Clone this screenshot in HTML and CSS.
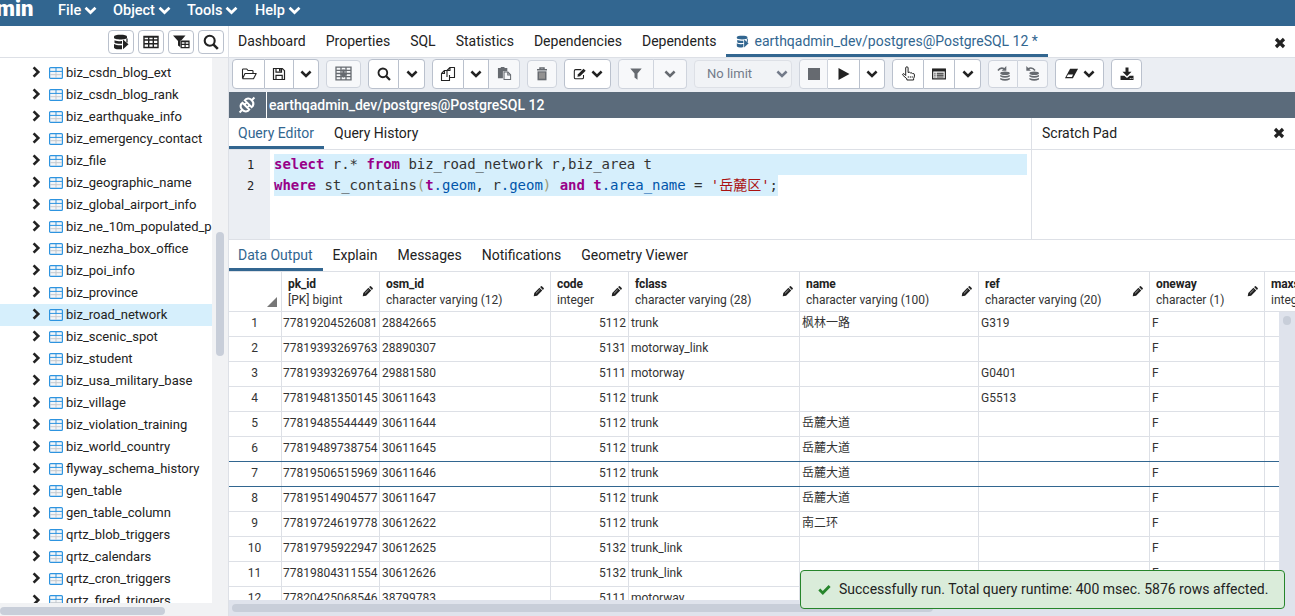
FILE: index.html
```html
<!DOCTYPE html>
<html lang="en">
<head>
    <meta charset="UTF-8">
    <meta name="viewport" content="width=device-width, initial-scale=1.0">
    <title>pgAdmin 4</title>
    <link rel="stylesheet" href="styles.css">
</head>
<body>
    <!-- Icon sprite -->
    <svg class="sprite">
        <symbol id="i-down" viewBox="0 0 12 12"><path d="M1.400 3.500L6 7.900l4.600-4.400" fill="none" stroke="currentColor" stroke-width="2.500"/></symbol>
        <symbol id="i-right" viewBox="0 0 12 12"><path d="M3.600 1.300L8.300 6l-4.700 4.700" fill="none" stroke="currentColor" stroke-width="2.600"/></symbol>
        <symbol id="i-x" viewBox="0 0 12 12"><path d="M2 2l8 8M10 2l-8 8" fill="none" stroke="currentColor" stroke-width="3.2"/></symbol>
        <symbol id="i-table" viewBox="0 0 14 12">
            <rect x=".6" y=".6" width="12.8" height="10.8" rx="1" fill="#f4f6f8" stroke="#2d94e0" stroke-width="1.2"/>
            <path d="M7 4v7M1.2 7.7h11.6" stroke="#c3c8ce" stroke-width="1"/>
            <path d="M7 1v3.5M1 4.4h12" stroke="#2d94e0" stroke-width="1"/>
        </symbol>
        <symbol id="i-query" viewBox="0 0 16 16">
            <path d="M1 2.600C1 1.400 4 .8 7.500.8S14 1.400 14 2.600v1.200C14 5 11 5.500 7.500 5.500S1 5 1 3.800z" fill="currentColor"/>
            <path d="M1.500 6.200c2 .9 5 1 7.500.9V9.800c-3 .2-6.500 0-7.500-1zM1 10c2 1.300 5 1.400 8 1.200v4c-3.500.3-8-.2-8-1.800z" fill="currentColor"/>
            <path d="M10 5.500l5.500 4.800L10 15.300z" fill="currentColor"/>
            <path d="M14 4.500v4" stroke="currentColor" stroke-width="1.200"/>
        </symbol>
        <symbol id="i-grid" viewBox="0 0 16 14"><path d="M1 1.500h14v11H1zM1 5h14M1 8.700h14M5.700 1.500v11M10.300 1.500v11M1 2h14" fill="none" stroke="currentColor" stroke-width="1.400"/></symbol>
        <symbol id="i-filtergrid" viewBox="0 0 17 14">
            <path d="M0 .5h12.500L7.800 6v6.500L5 10.500V6z" fill="currentColor"/>
            <path d="M7.500 5.500h9v8h-9z" fill="#fff"/>
            <path d="M8.200 6h7.800v6.700H8.200zM8.200 9.300H16M12.100 6v6.700M8.200 6.600H16" fill="none" stroke="currentColor" stroke-width="1.200"/>
        </symbol>
        <symbol id="i-search" viewBox="0 0 16 16"><circle cx="6.700" cy="6.700" r="5" fill="none" stroke="currentColor" stroke-width="2.100"/><path d="M10.300 10.300l4.500 4.500" stroke="currentColor" stroke-width="2.600"/></symbol>
        <symbol id="i-open" viewBox="0 0 16 14"><path d="M1.500 11.500V2.800q0-.8.8-.8h3.500l1.200 1.500h4.200q.8 0 .8.800v1.700M1.500 11.700L4 6.500h11.200l-2.700 5.300H1.500" fill="none" stroke="currentColor" stroke-width="1.100" stroke-linejoin="round"/></symbol>
        <symbol id="i-save" viewBox="0 0 14 14"><path d="M1.500 1.500h8.800l2.200 2.200v8.800h-11zM4 12.500V8.300h6.200v4.200M4 1.700v3.500h5.500V1.700" fill="none" stroke="currentColor" stroke-width="1.200"/><path d="M7 2h1.700v2.600H7z" fill="currentColor"/></symbol>
        <symbol id="i-savegrid" viewBox="0 0 17 15">
            <path d="M1 1.200h15v12.600H1zM1 4.400h15M1 7.500h15M1 10.700h15M6 1v13M11 1v13" fill="none" stroke="currentColor" stroke-width="1.300"/>
            <path d="M7.300 3.500h2.400v4h2.800l-4 4.300-4-4.300h2.800z" fill="currentColor"/>
        </symbol>
        <symbol id="i-copy" viewBox="0 0 16 16"><path d="M7 11V4.500L10 1.500h4.500v10H9.500M10 1.500v3H7M1.500 7.500L4.500 4.500H7M4.500 4.500v3h-3v7h8V9" fill="none" stroke="currentColor" stroke-width="1.100" stroke-linejoin="round"/></symbol>
        <symbol id="i-paste" viewBox="0 0 16 16"><path d="M1 2h3V1h4v1h3v3.500H6.300V13H1z" fill="currentColor"/><path d="M7.500 6.500h4.200L14.500 9.300v5.200h-7zM11.500 6.500v3h3" fill="none" stroke="currentColor" stroke-width="1.100"/></symbol>
        <symbol id="i-trash" viewBox="0 0 12 14"><path d="M1 2.800h10M4 2.500V1h4v1.500" fill="none" stroke="currentColor" stroke-width="1.500"/><path d="M1.500 4.300h9v9h-9z" fill="currentColor"/><path d="M4 5.500v6.200M6 5.500v6.200M8 5.500v6.200" stroke="#d5cdc4" stroke-width=".8"/></symbol>
        <symbol id="i-edit" viewBox="0 0 16 14"><path d="M9.500 2H3Q1.500 2 1.500 3.500v7.500q0 1.500 1.500 1.500h7.500Q12 12.500 12 11V8" fill="none" stroke="currentColor" stroke-width="1.200"/><path d="M5 10.200l.7-3L12 1l2.500 2.300-6.400 6.300z" fill="currentColor"/></symbol>
        <symbol id="i-filter" viewBox="0 0 12 12"><path d="M.3.500h11.400L7.500 5.500v6.200L4.500 9.500v-4z" fill="currentColor"/></symbol>
        <symbol id="i-stop" viewBox="0 0 12 12"><path d="M0 0h12v12H0z" fill="currentColor"/></symbol>
        <symbol id="i-play" viewBox="0 0 12 12"><path d="M.5 0l11 6-11 6z" fill="currentColor"/></symbol>
        <symbol id="i-hand" viewBox="0 0 14 15"><path d="M4.200 9.500V2q0-1.200 1.200-1.200T6.600 2v4.500q2-.8 2.600.5 1.600-.5 2 .6 1.800-.3 1.800 1.200 0 2.500-.9 3.700V14H5.400v-1.200L1.300 9.200q-.6-1 .3-1.500t2.600 1.800" fill="none" stroke="currentColor" stroke-width="1" stroke-linejoin="round"/><path d="M6.800 10v2M8.800 10v2M10.700 10v2" stroke="currentColor" stroke-width=".7"/></symbol>
        <symbol id="i-list" viewBox="0 0 15 12"><path d="M.7.700h13.600v10.600H.7z" fill="none" stroke="currentColor" stroke-width="1.300"/><path d="M.5.500h14v2.800H.5z" fill="currentColor"/><path d="M2.500 5.200h1.300M5 5.200h7.500M2.500 7.200h1.300M5 7.200h7.500M2.500 9.200h1.300M5 9.200h7.500" stroke="currentColor" stroke-width="1.100"/></symbol>
        <symbol id="i-commit" viewBox="0 0 14 15"><path d="M1.500 4.500Q4 .8 8 3" fill="none" stroke="currentColor" stroke-width="1.600"/><path d="M9.800 0v4.800H5.200z" fill="currentColor"/><ellipse cx="8.500" cy="7.200" rx="4.800" ry="1.800" fill="currentColor"/><path d="M3.700 9q4.800 2.200 9.600 0v1.600q-4.800 2.400-9.600 0zM3.700 12q4.800 2.200 9.600 0v1.600q-4.800 2.400-9.600 0z" fill="currentColor"/></symbol>
        <symbol id="i-rollback" viewBox="0 0 14 15"><path d="M2.500 3Q6.500 .5 9.500 4.500" fill="none" stroke="currentColor" stroke-width="1.600"/><path d="M.8 0v4.800h4.600z" fill="currentColor"/><ellipse cx="8.700" cy="7.200" rx="4.800" ry="1.800" fill="currentColor"/><path d="M3.900 9q4.800 2.200 9.600 0v1.600q-4.800 2.400-9.600 0zM3.900 12q4.800 2.200 9.600 0v1.600q-4.800 2.400-9.600 0z" fill="currentColor"/></symbol>
        <symbol id="i-eraser" viewBox="0 0 16 12"><path d="M6.500 1H15L9.500 11H1z" fill="currentColor"/><path d="M4.300 7h5.300L8.500 9.600H2.800z" fill="#fff"/></symbol>
        <symbol id="i-download" viewBox="0 0 14 13"><path d="M5.500 0h3v4.200h3L7 8.700 2.500 4.200h3z" fill="currentColor"/><path d="M.5 8.300h3.800L7 10.500l2.700-2.200h3.800v4.200H.5z" fill="currentColor"/><path d="M9.800 11h1M11.600 11h1" stroke="#fff" stroke-width=".8"/></symbol>
        <symbol id="i-link" viewBox="0 0 18 18">
            <g transform="rotate(-45 9 9)" fill="none" stroke="currentColor" stroke-width="2">
                <path d="M7.300 4.200v9.600H5.500q-3.200-1-3.200-4.800t3.200-4.800zM10.700 4.200v9.600h1.800q3.200-1 3.200-4.800t-3.200-4.800zM-1.500 9h3.800M15.700 9h3.800M7.300 7h3.400M7.300 11h3.400"/>
            </g>
        </symbol>
        <symbol id="i-pencil" viewBox="0 0 12 12"><path d="M.8 11.200l.6-3.700L7 1.900l3.100 3.100-5.600 5.600zM7.700 1.200L8.800.3q.5-.4.900 0l2 2q.4.400 0 .9l-.9 1.100z" fill="currentColor"/><path d="M3.300 8L7.300 4.100" stroke="#fff" stroke-width=".6"/></symbol>
        <symbol id="i-check" viewBox="0 0 13 11"><path d="M1.300 5.500l3.500 3.400 6.800-7" fill="none" stroke="currentColor" stroke-width="2.800"/></symbol>
    </svg>

    <div class="navbar">
        <div class="brand">min</div>
        <div class="menu menu-file">File <svg><use href="#i-down"/></svg></div>
        <div class="menu menu-object">Object <svg><use href="#i-down"/></svg></div>
        <div class="menu menu-tools">Tools <svg><use href="#i-down"/></svg></div>
        <div class="menu">Help <svg><use href="#i-down"/></svg></div>
    </div>

    <div class="workspace">
        <div class="sidebar">
            <div class="sidebar-tools">
                <button><svg class="ic16"><use href="#i-query"/></svg></button>
                <button><svg class="ic-grid"><use href="#i-grid"/></svg></button>
                <button><svg class="ic-fg"><use href="#i-filtergrid"/></svg></button>
                <button><svg class="ic16"><use href="#i-search"/></svg></button>
            </div>
            <div class="tree-wrap">
                <div class="tree" id="tree"></div>
                <div class="tree-vscroll"><div class="thumb"></div></div>
            </div>
            <div class="tree-hscroll"><div class="thumb"></div></div>
        </div>

        <div class="main">
            <div class="tabs top-tabs">
                <div class="tab">Dashboard</div>
                <div class="tab">Properties</div>
                <div class="tab">SQL</div>
                <div class="tab">Statistics</div>
                <div class="tab">Dependencies</div>
                <div class="tab">Dependents</div>
                <div class="tab active"><svg class="tab-icon"><use href="#i-query"/></svg>earthqadmin_dev/postgres@PostgreSQL 12 *</div>
                <svg class="close"><use href="#i-x"/></svg>
            </div>

            <div class="toolbar">
                <div class="group">
                    <button class="w33"><svg class="ic-open"><use href="#i-open"/></svg></button>
                    <button class="w29"><svg class="ic14"><use href="#i-save"/></svg></button>
                    <button class="w25"><svg class="ic12"><use href="#i-down"/></svg></button>
                </div>
                <div class="group disabled small">
                    <button class="w35"><svg class="ic-sg"><use href="#i-savegrid"/></svg></button>
                </div>
                <div class="group">
                    <button class="w31"><svg class="ic14"><use href="#i-search"/></svg></button>
                    <button class="w26"><svg class="ic12"><use href="#i-down"/></svg></button>
                </div>
                <div class="group">
                    <button class="w32"><svg class="ic16"><use href="#i-copy"/></svg></button>
                    <button class="w25"><svg class="ic12"><use href="#i-down"/></svg></button>
                    <button class="w31 off"><svg class="ic15"><use href="#i-paste"/></svg></button>
                </div>
                <div class="group disabled small">
                    <button class="w30"><svg class="ic-trash"><use href="#i-trash"/></svg></button>
                </div>
                <div class="group">
                    <button class="w47"><svg class="ic14"><use href="#i-edit"/></svg><svg class="ic12"><use href="#i-down"/></svg></button>
                </div>
                <div class="group disabled">
                    <button class="w36"><svg class="ic12"><use href="#i-filter"/></svg></button>
                    <button class="w33"><svg class="ic12"><use href="#i-down"/></svg></button>
                </div>
                <div class="limit">No limit <svg class="ic12"><use href="#i-down"/></svg></div>
                <div class="group">
                    <button class="w29 off"><svg class="ic12"><use href="#i-stop"/></svg></button>
                    <button class="w32"><svg class="ic12"><use href="#i-play"/></svg></button>
                    <button class="w25"><svg class="ic12"><use href="#i-down"/></svg></button>
                </div>
                <div class="group">
                    <button class="w32"><svg class="ic15"><use href="#i-hand"/></svg></button>
                    <button class="w31"><svg class="ic14"><use href="#i-list"/></svg></button>
                    <button class="w26"><svg class="ic12"><use href="#i-down"/></svg></button>
                </div>
                <div class="group disabled small">
                    <button class="w30"><svg class="ic15"><use href="#i-commit"/></svg></button>
                    <button class="w30"><svg class="ic15"><use href="#i-rollback"/></svg></button>
                </div>
                <div class="group">
                    <button class="w49"><svg class="ic15"><use href="#i-eraser"/></svg><svg class="ic12"><use href="#i-down"/></svg></button>
                </div>
                <div class="group">
                    <button class="w31"><svg class="ic14"><use href="#i-download"/></svg></button>
                </div>
            </div>

            <div class="connection">
                <div class="conn-status"><svg><use href="#i-link"/></svg></div>
                <div class="conn-title">earthqadmin_dev/postgres@PostgreSQL 12</div>
            </div>

            <div class="query-area">
                <div class="query-panel">
                    <div class="tabs">
                        <div class="tab active">Query Editor</div>
                        <div class="tab">Query History</div>
                    </div>
                    <div class="editor">
                        <div class="gutter"><div>1</div><div>2</div></div>
                        <div class="code">
                            <pre class="line full"><b>select</b> r.* <b>from</b> biz_road_network r,biz_area t</pre>
                            <pre class="line"><b>where</b> st_contains<i>(</i><b>t</b><u>.geom</u>, r<u>.geom</u><i>)</i> <b>and</b> <b>t</b><u>.area_name</u> = <s>'岳麓区'</s>;</pre>
                        </div>
                    </div>
                </div>
                <div class="scratch">
                    <div class="scratch-head">Scratch Pad <svg class="close"><use href="#i-x"/></svg></div>
                </div>
            </div>

            <div class="tabs output-tabs">
                <div class="tab active">Data Output</div>
                <div class="tab">Explain</div>
                <div class="tab">Messages</div>
                <div class="tab">Notifications</div>
                <div class="tab">Geometry Viewer</div>
            </div>

            <div class="grid-head" id="grid-head"></div>
            <div class="grid-wrap">
                <div class="grid-body" id="grid-body"></div>
                <div class="grid-vscroll"><div class="thumb"></div></div>
            </div>
            <div class="grid-hscroll"><div class="thumb"></div></div>
        </div>
    </div>

    <div class="toast"><svg><use href="#i-check"/></svg>Successfully run. Total query runtime: 400 msec. 5876 rows affected.</div>

    <script>
        const tables = ['biz_csdn_blog_ext', 'biz_csdn_blog_rank', 'biz_earthquake_info', 'biz_emergency_contact',
            'biz_file', 'biz_geographic_name', 'biz_global_airport_info', 'biz_ne_10m_populated_places',
            'biz_nezha_box_office', 'biz_poi_info', 'biz_province', 'biz_road_network', 'biz_scenic_spot',
            'biz_student', 'biz_usa_military_base', 'biz_village', 'biz_violation_training', 'biz_world_country',
            'flyway_schema_history', 'gen_table', 'gen_table_column', 'qrtz_blob_triggers', 'qrtz_calendars',
            'qrtz_cron_triggers', 'qrtz_fired_triggers'];

        const columns = [
            ['pk_id', '[PK] bigint'],
            ['osm_id', 'character varying (12)'],
            ['code', 'integer'],
            ['fclass', 'character varying (28)'],
            ['name', 'character varying (100)'],
            ['ref', 'character varying (20)'],
            ['oneway', 'character (1)'],
            ['maxspeed', 'integer']
        ];

        const rows = [
            ['77819204526081', '28842665', '5112', 'trunk', '枫林一路', 'G319', 'F', ''],
            ['77819393269763', '28890307', '5131', 'motorway_link', '', '', 'F', ''],
            ['77819393269764', '29881580', '5111', 'motorway', '', 'G0401', 'F', ''],
            ['77819481350145', '30611643', '5112', 'trunk', '', 'G5513', 'F', ''],
            ['77819485544449', '30611644', '5112', 'trunk', '岳麓大道', '', 'F', ''],
            ['77819489738754', '30611645', '5112', 'trunk', '岳麓大道', '', 'F', ''],
            ['77819506515969', '30611646', '5112', 'trunk', '岳麓大道', '', 'F', ''],
            ['77819514904577', '30611647', '5112', 'trunk', '岳麓大道', '', 'F', ''],
            ['77819724619778', '30612622', '5112', 'trunk', '南二环', '', 'F', ''],
            ['77819795922947', '30612625', '5132', 'trunk_link', '', '', 'F', ''],
            ['77819804311554', '30612626', '5132', 'trunk_link', '', '', 'F', ''],
            ['77820425068546', '38799783', '5111', 'motorway', '', '', '', '']
        ];

        // Object tree
        document.getElementById('tree').innerHTML = tables.map(name =>
            `<div class="node${name === 'biz_road_network' ? ' selected' : ''}">
                <svg class="arrow"><use href="#i-right"/></svg>
                <svg class="table-icon"><use href="#i-table"/></svg>
                <span>${name}</span>
            </div>`).join('');

        // Grid header
        document.getElementById('grid-head').innerHTML = '<div class="corner"></div>' + columns.map(([name, type]) =>
            `<div class="col"><div><strong>${name}</strong><span>${type}</span></div>
                <svg><use href="#i-pencil"/></svg></div>`).join('');

        // Grid rows
        document.getElementById('grid-body').innerHTML = rows.map((row, i) =>
            `<div class="row${i === 6 ? ' current' : ''}${i === 5 ? ' before-current' : ''}">
                <div class="num">${i + 1}</div>${row.map(v => `<div>${v}</div>`).join('')}
            </div>`).join('');
    </script>
</body>
</html>
```
FILE: styles.css
```css
* {
    box-sizing: border-box;
}
body {
    margin: 0;
    height: 100vh;
    overflow: hidden;
    display: flex;
    flex-direction: column;
    font-family: Roboto, "Noto Sans CJK SC", sans-serif;
    font-size: 14px;
    color: #222;
    background-color: #fff;
}
svg {
    flex: none;
    display: block;
}
.sprite {
    position: absolute;
    width: 0;
    height: 0;
}
button {
    padding: 0;
    font: inherit;
    color: #222;
    background-color: #fff;
    border: 1px solid #bac1cd;
    display: flex;
    align-items: center;
    justify-content: center;
}
.thumb {
    background-color: #c8ced9;
    border-radius: 4px;
}

/* Menu bar */
.navbar {
    height: 26px;
    flex: none;
    display: flex;
    background-color: #326690;
    color: #fff;
    font-weight: 500;
    font-size: 14.5px;
    line-height: 20px;
}
.brand {
    width: 58px;
    font-size: 22px;
    font-weight: 900;
    line-height: 18px;
    text-indent: -4px;
}
.menu {
    display: flex;
    align-items: center;
    height: 21px;
    gap: 3px;
}
.menu svg {
    width: 13px;
    height: 13px;
}
.menu-file { width: 55px; }
.menu-object { width: 74px; }
.menu-tools { width: 68px; }

.workspace {
    flex: 1;
    min-height: 0;
    display: flex;
}

/* Browser tree */
.sidebar {
    width: 228px;
    flex: none;
    display: flex;
    flex-direction: column;
}
.sidebar-tools {
    height: 32px;
    flex: none;
    display: flex;
    justify-content: flex-end;
    gap: 4px;
    padding: 4px 4px 0 0;
    border-bottom: 1px solid #dde0e6;
}
.sidebar-tools button {
    width: 26px;
    height: 24px;
    border-radius: 4px;
}
.ic16 { width: 16px; height: 16px; }
.ic15 { width: 15px; height: 15px; }
.ic14 { width: 14px; height: 14px; }
.ic12 { width: 12px; height: 12px; }
.ic-grid { width: 16px; height: 14px; }
.ic-fg { width: 17px; height: 14px; }
.ic-open { width: 16px; height: 14px; }
.ic-sg { width: 17px; height: 15px; }
.ic-trash { width: 12px; height: 14px; }
.tree-wrap {
    flex: 1;
    min-height: 0;
    display: flex;
}
.tree {
    width: 212px;
    padding-top: 4px;
    overflow: hidden;
}
.node {
    height: 22px;
    display: flex;
    align-items: center;
    padding: 0 0 2px 30px;
    font-size: 13px;
    white-space: nowrap;
}
.node.selected {
    background-color: #d6effc;
}
.arrow {
    width: 12px;
    height: 12px;
    margin-right: 7px;
}
.table-icon {
    width: 14px;
    height: 12px;
    margin: 1px 3px 0 0;
}
.tree-vscroll {
    width: 16px;
    background-color: #f1f2f4;
    padding: 174px 4px 0;
}
.tree-vscroll .thumb {
    height: 124px;
}
.tree-hscroll {
    height: 13px;
    flex: none;
    background-color: #f1f2f4;
    padding-top: 4px;
}
.tree-hscroll .thumb {
    width: 165px;
    height: 8px;
}

/* Main panel */
.main {
    flex: 1;
    min-width: 0;
    display: flex;
    flex-direction: column;
    overflow: hidden;
    border-left: 1px solid #dde0e6;
}
.tabs {
    height: 32px;
    flex: none;
    display: flex;
    border-bottom: 1px solid #dde0e6;
    white-space: nowrap;
}
.tab {
    height: 31px;
    padding: 0 10px;
    line-height: 31px;
    border-bottom: 3px solid transparent;
}
.tab:first-child {
    padding-left: 9px;
}
.tab.active {
    display: flex;
    color: #326690;
    border-bottom-color: #326690;
}
.tab-icon {
    width: 13px;
    height: 15px;
    margin: 8px 5px 0 0;
}
.close {
    width: 12px;
    height: 12px;
    margin-left: auto;
}
.top-tabs .close {
    margin: 11px 9px 0 auto;
}

/* Toolbar */
.toolbar {
    height: 34px;
    flex: none;
    display: flex;
    align-items: center;
    gap: 7px;
    padding: 0 0 3px 3px;
    background-color: #ebeef3;
}
.group {
    display: flex;
    height: 30px;
    border-radius: 4px;
}
.group.small {
    height: 28px;
}
.group button {
    gap: 4px;
    border-left-width: 0;
}
.group button:first-child {
    border-left-width: 1px;
    border-radius: 4px 0 0 4px;
}
.group button:last-child {
    border-radius: 0 4px 4px 0;
}
.group button:only-child {
    border-radius: 4px;
}
.group.disabled button, .group .off {
    color: #666a70;
    background-color: #f7f8fa;
    border-color: #cfd4dd;
}
.w25 { width: 25px; }
.w26 { width: 26px; }
.w29 { width: 29px; }
.w30 { width: 30px; }
.w31 { width: 31px; }
.w32 { width: 32px; }
.w33 { width: 33px; }
.w35 { width: 35px; }
.w36 { width: 36px; }
.w47 { width: 47px; }
.w49 { width: 49px; }
.limit {
    width: 98px;
    height: 28px;
    display: flex;
    align-items: center;
    justify-content: space-between;
    padding: 0 3px 0 12px;
    font-size: 13px;
    color: #737b8a;
    background-color: #f1f3f6;
    border: 1px solid #dde0e6;
    border-radius: 4px;
}

.connection {
    height: 26px;
    flex: none;
    display: flex;
    align-items: center;
    color: #fff;
    background-color: #5b6b7b;
    font-weight: 500;
}
.conn-status {
    width: 38px;
    height: 26px;
    display: flex;
    align-items: center;
    padding-left: 9px;
    border-right: 1px solid #fff;
}
.conn-status svg {
    width: 18px;
    height: 18px;
}
.conn-title {
    padding-left: 2px;
}

/* Query editor */
.query-area {
    height: 122px;
    flex: none;
    display: flex;
    border-bottom: 1px solid #dde0e6;
}
.query-panel {
    width: 802px;
    flex: none;
}
.editor {
    height: 89px;
    display: flex;
}
.gutter {
    width: 41px;
    padding: 5px 0 0 2px;
    background-color: #ebeef3;
    font-family: "DejaVu Sans Mono", monospace;
    font-size: 12px;
    line-height: 21px;
    text-align: center;
}
.code {
    padding: 4px 4px 0;
    flex: 1;
}
.line {
    margin: 0;
    width: max-content;
    height: 21px;
    font-family: "DejaVu Sans Mono", "Noto Sans CJK SC", monospace;
    font-size: 14px;
    letter-spacing: -0.03px;
    line-height: 21px;
    color: #333;
    background-color: #d6effc;
}
.line.full {
    width: auto;
}
.line b {
    color: #908;
}
.line u {
    color: #05a;
    text-decoration: none;
}
.line i {
    color: #997;
    font-style: normal;
}
.line s {
    color: #a11;
    text-decoration: none;
}
.scratch {
    flex: 1;
    border-left: 1px solid #dde0e6;
}
.scratch-head {
    height: 32px;
    display: flex;
    align-items: center;
    padding: 0 10px 2px 10px;
    border-bottom: 1px solid #dde0e6;
}

/* Data grid */
.grid-head, .row {
    display: grid;
    grid-template-columns: 53px 98px 171px 78px 171px 179px 171px 115px 120px;
}
.grid-head {
    height: 40px;
    flex: none;
    overflow: hidden;
    font-size: 12px;
    border-bottom: 1px solid #dde0e6;
}
.corner, .col {
    border-right: 1px solid #dde0e6;
}
.corner {
    display: flex;
    justify-content: flex-end;
    align-items: flex-end;
    padding: 0 4px 4px 0;
}
.corner::after {
    content: "";
    border-left: 10px solid transparent;
    border-bottom: 10px solid #777;
}
.col {
    display: flex;
    align-items: center;
    justify-content: space-between;
    padding: 0 6px;
    white-space: nowrap;
}
.col strong {
    display: block;
    font-weight: 700;
    letter-spacing: -0.1px;
}
.col strong, .col span {
    line-height: 16px;
}
.col span {
    color: #333;
}
.col svg {
    width: 11px;
    height: 11px;
}
.grid-wrap {
    flex: 1;
    min-height: 0;
    display: flex;
}
.grid-body {
    width: 1050px;
    overflow: hidden;
}
.row {
    height: 25px;
    font-size: 12px;
    line-height: 22px;
    color: #333;
    border-bottom: 1px solid #dde0e6;
}
.row div {
    padding: 0 2px;
    border-right: 1px solid #dde0e6;
}
.row div:nth-child(2) {
    padding: 0 0 0 1px;
}
.row div:nth-child(4) {
    text-align: right;
}
.row .num {
    padding-right: 3px;
    text-align: center;
}
.row.current, .row.before-current {
    border-bottom-color: #326690;
}
.grid-vscroll {
    flex: 1;
    background-color: #dfe3ec;
    padding: 4px;
}
.grid-vscroll .thumb {
    height: 9px;
}
.grid-hscroll {
    height: 16px;
    flex: none;
    background-color: #dfe3ec;
    padding: 4px 3px;
}
.grid-hscroll .thumb {
    width: 701px;
    height: 8px;
}

/* Notification over the grid */
.toast {
    position: absolute;
    right: 10px;
    bottom: 7px;
    width: 485px;
    height: 39px;
    display: flex;
    align-items: center;
    padding: 0 0 1px 17px;
    white-space: nowrap;
    background-color: #daecda;
    border: 1px solid #26852b;
    border-radius: 4px;
}
.toast svg {
    width: 13px;
    height: 11px;
    margin-right: 8px;
    color: #26852b;
}
```
